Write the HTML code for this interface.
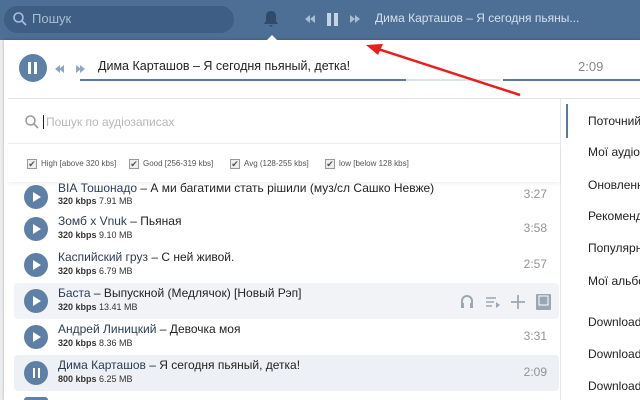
<!DOCTYPE html>
<html><head><meta charset="utf-8"><style>
*{margin:0;padding:0;box-sizing:border-box}
html,body{width:640px;height:400px;overflow:hidden}
body{background:#edeef0;font-family:"Liberation Sans","Noto Sans CJK SC",sans-serif;font-size:12px;color:#222}
#wrap{position:relative;width:640px;height:400px;overflow:hidden}
.abs{position:absolute}
#top{left:0;top:0;width:640px;height:40px;background:#4d6e95}
#panel{left:4px;top:40px;width:636px;height:360px;background:#fff;box-shadow:0 0 3px rgba(0,0,0,.25)}
.row{position:absolute;left:14px;width:545px;height:36px}
.play{position:absolute;left:10px;top:6px;width:24px;height:24px;border-radius:50%;background:#5e7fa6}
.play.tri::after{content:"";position:absolute;left:9px;top:7px;border-left:8px solid #fff;border-top:5px solid transparent;border-bottom:5px solid transparent}
.t1{position:absolute;left:44px;top:3px;font-size:12px;color:#222;white-space:nowrap}
.t1 a{color:#2b3d55}
.t2{position:absolute;left:44px;top:19px;font-size:9px;color:#333}
.t2 b{font-weight:bold}
.dur{position:absolute;right:12px;top:10px;color:#939393;font-size:12px}
.menu{position:absolute;left:588px;width:52px;overflow:hidden;font-size:12px;color:#222;white-space:nowrap}
.cb{position:absolute;top:159px;font-size:8px;color:#555;white-space:nowrap}
.cb i{display:inline-block;width:10px;height:10px;border:1px solid #999;background:#eee;margin-right:4px;vertical-align:-1px;font-style:normal;font-size:9px;line-height:8px;text-align:center}
</style></head><body><div id="wrap">
<div id="top" class="abs"></div>
<div class="abs" style="left:4px;top:6px;width:230px;height:27px;border-radius:14px;background:#3e5e84"></div>
<svg class="abs" style="left:12px;top:11px" width="16" height="16"><circle cx="6.5" cy="6.5" r="4.5" fill="none" stroke="#a9bdd3" stroke-width="1.6"/><path d="M10 10l4 4" stroke="#a9bdd3" stroke-width="1.8"/></svg>
<div class="abs" style="left:32px;top:11px;color:#a9bdd3;font-size:13px">Пошук</div>
<svg class="abs" style="left:262px;top:9px" width="18" height="20"><path d="M9 2c-3 0-5 2-5 5v5l-2 3h14l-2-3V7c0-3-2-5-5-5z M7 16h4l-2 2z" fill="#2f4a6b"/></svg>
<svg class="abs" style="left:303px;top:11px" width="60" height="16"><path d="M2 8l5-4v8z M7 8l5-4v8z" fill="#a9bdd3"/><rect x="24" y="2" width="4" height="13" fill="#c5d3e2"/><rect x="31" y="2" width="4" height="13" fill="#c5d3e2"/><path d="M47 4l5 4-5 4z M52 4l5 4-5 4z" fill="#a9bdd3"/></svg>
<div class="abs" style="left:375px;top:11px;color:#d5e0ec;font-size:12px;white-space:nowrap">Дима Карташов – Я сегодня пьяны...</div>
<div id="panel" class="abs"></div>
<div class="abs" style="left:266px;top:35px;width:0;height:0;border-left:6px solid transparent;border-right:6px solid transparent;border-bottom:6px solid #fff"></div>
<div class="abs" style="left:19px;top:54px;width:28px;height:28px;border-radius:50%;background:#5e7fa6"></div>
<div class="abs" style="left:28px;top:62px;width:3px;height:12px;background:#fff"></div>
<div class="abs" style="left:34px;top:62px;width:3px;height:12px;background:#fff"></div>
<svg class="abs" style="left:54px;top:63px" width="36" height="12"><path d="M1 6l5-4v8z M5 6l5-4v8z" fill="#8fa6c0"/><path d="M22 2l5 4-5 4z M26 2l5 4-5 4z" fill="#8fa6c0"/></svg>
<div class="abs" style="left:98px;top:59px;font-size:12.5px;white-space:nowrap;color:#222">Дима Карташов – Я сегодня пьяный, детка!</div>
<div class="abs" style="left:578px;top:59px;font-size:13px;color:#888">2:09</div>
<div class="abs" style="left:80px;top:79px;width:326px;height:2px;background:#5b7a9e"></div>
<div class="abs" style="left:406px;top:79px;width:94px;height:2px;background:#dde3ea"></div>
<div class="abs" style="left:503px;top:79px;width:137px;height:2px;background:#5b7a9e"></div>
<div class="abs" style="left:8px;top:98px;width:632px;height:1px;background:#e4e6e9"></div>
<div class="abs" style="left:560px;top:99px;width:1px;height:301px;background:#e4e6e9"></div>
<div class="abs" style="left:566px;top:104px;width:2px;height:34px;background:#5b7a9e"></div>
<svg class="abs" style="left:24px;top:114px" width="16" height="16"><circle cx="6.5" cy="6.5" r="4.5" fill="none" stroke="#999" stroke-width="1.5"/><path d="M10 10l4 4" stroke="#999" stroke-width="1.6"/></svg>
<div class="abs" style="left:43px;top:115px;width:1px;height:14px;background:#222"></div>
<div class="abs" style="left:46px;top:115px;color:#b8b8b8;font-size:12px">Пошук по аудіозаписах</div>
<div class="abs" style="left:8px;top:143px;width:552px;height:1px;background:#eceef1"></div>

<div class="row" style="top:176px;clip-path:inset(7px 0 0 0)"><div class="play tri" style="top:9px"></div><div class="t1" style="top:5px"><a>ВІА Тошонадо</a> – А ми багатими стать рішили (муз/сл Сашко Невже)</div><div class="t2" style="top:20px"><b>320 kbps</b> 7.91 MB</div><div class="dur" style="top:11px">3:27</div></div>
<div class="abs" style="left:8px;top:144px;width:552px;height:38px;background:#fff;box-shadow:0 2px 3px rgba(0,0,0,.06)"></div>
<div class="cb" style="left:27px"><i>✔</i>High [above 320 kbs]</div>
<div class="cb" style="left:129px"><i>✔</i>Good [256-319 kbs]</div>
<div class="cb" style="left:230px"><i>✔</i>Avg (128-255 kbs]</div>
<div class="cb" style="left:325px"><i>✔</i>low [below 128 kbs]</div>

<div class="row" style="top:211px"><div class="play tri"></div><div class="t1"><a>Зомб x Vnuk</a> – Пьяная</div><div class="t2"><b>320 kbps</b> 9.10 MB</div><div class="dur">3:58</div></div>
<div class="row" style="top:247px"><div class="play tri"></div><div class="t1"><a>Каспийский груз</a> – С ней живой.</div><div class="t2"><b>320 kbps</b> 6.79 MB</div><div class="dur">2:57</div></div>
<div class="row" style="top:283px;background:#f1f3f6;border-radius:4px"><div class="play tri"></div><div class="t1"><a>Баста</a> – Выпускной (Медлячок) [Новый Рэп]</div><div class="t2"><b>320 kbps</b> 13.41 MB</div>
<svg style="position:absolute;left:446px;top:10px" width="100" height="18"><path d="M2 13V8a5 5 0 0 1 10 0v5" fill="none" stroke="#9aa6b4" stroke-width="2"/><rect x="1" y="10" width="3" height="5" fill="#9aa6b4"/><rect x="10" y="10" width="3" height="5" fill="#9aa6b4"/><path d="M26 5h10M26 9h8M26 13h6" stroke="#9aa6b4" stroke-width="1.5"/><path d="M36 9l4 3-4 3z" fill="#9aa6b4"/><path d="M58 2v14M51 9h14" stroke="#9aa6b4" stroke-width="1.7"/><rect x="76" y="1" width="15" height="16" rx="1" fill="#9aa6b4"/><rect x="79" y="3" width="9" height="9" fill="none" stroke="#fff" stroke-width="1"/></svg></div>
<div class="row" style="top:319px"><div class="play tri"></div><div class="t1"><a>Андрей Линицкий</a> – Девочка моя</div><div class="t2"><b>320 kbps</b> 8.36 MB</div><div class="dur">3:31</div></div>
<div class="row" style="top:355px;background:#edf0f4;border-radius:4px"><div class="play"></div><div style="position:absolute;left:19px;top:13px;width:2px;height:10px;background:#fff"></div><div style="position:absolute;left:24px;top:13px;width:2px;height:10px;background:#fff"></div><div class="t1"><a>Дима Карташов</a> – Я сегодня пьяный, детка!</div><div class="t2"><b>800 kbps</b> 6.25 MB</div><div class="dur">2:09</div></div>
<div class="abs" style="left:24px;top:397px;width:24px;height:3px;border-radius:12px 12px 0 0;background:#5e7fa6"></div>

<div class="menu" style="top:114px">Поточний</div>
<div class="menu" style="top:145px">Мої аудіо</div>
<div class="menu" style="top:178px">Оновлення</div>
<div class="menu" style="top:209px">Рекомендації</div>
<div class="menu" style="top:241px">Популярне</div>
<div class="menu" style="top:274px">Мої альбоми</div>
<div class="menu" style="top:315px">Download</div>
<div class="menu" style="top:347px">Download</div>
<div class="menu" style="top:379px">Download</div>

<svg class="abs" style="left:0;top:0" width="640" height="400"><path d="M520 95L378 49" stroke="#e8201c" stroke-width="2.5"/><path d="M366 45l17-1-5 11z" fill="#e8201c"/></svg>
</div></body></html>
